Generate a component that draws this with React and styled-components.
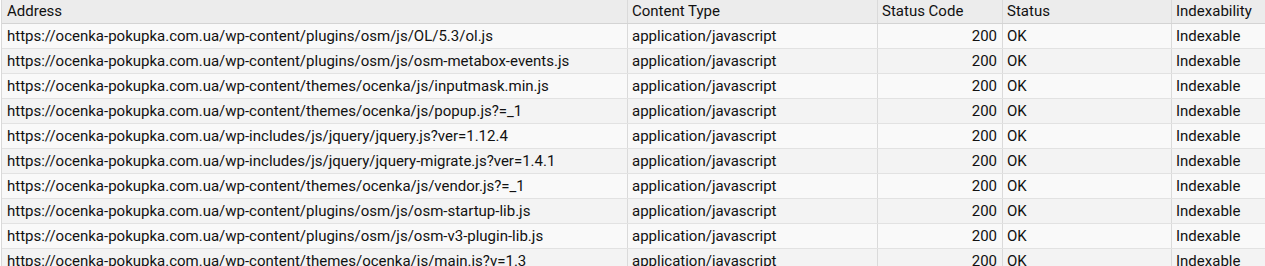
import React from 'react';
import styled, { createGlobalStyle } from 'styled-components';

const GlobalStyle = createGlobalStyle`
  html, body {
    margin: 0;
    padding: 0;
    background: #ffffff;
  }
  body {
    font-family: Roboto, "Liberation Sans", sans-serif;
    overflow: hidden;
  }
`;

const Grid = styled.div`
  width: 1264px;
  margin-left: 1px;
  border-left: 1px solid #d9d9d9;
  font-size: 15px;
  color: #111;
`;

const Row = styled.div`
  display: grid;
  grid-template-columns: 626px 250px 125px 169px 1fr;
  height: ${p => (p.$header ? 24 : 25)}px;
  background: ${p => (p.$header ? '#ececec' : p.$even ? '#f3f3f3' : '#f9f9f9')};
  border-bottom: 1px solid ${p => (p.$header ? '#d4d4d4' : '#e2e2e2')};
  box-sizing: border-box;
`;

const Cell = styled.div`
  box-sizing: border-box;
  border-right: 1px solid #dadada;
  padding: 0 ${p => (p.$right ? '5px' : '4px')} 0 ${p => (p.$first ? '5px' : '4px')};
  text-align: ${p => (p.$right ? 'right' : 'left')};
  line-height: ${p => (p.$header ? 23 : 24)}px;
  white-space: nowrap;
  overflow: hidden;

  &:last-child {
    border-right: none;
  }
`;

const columns = ['Address', 'Content Type', 'Status Code', 'Status', 'Indexability'];

const base = 'https://ocenka-pokupka.com.ua/';
const paths = [
  'wp-content/plugins/osm/js/OL/5.3/ol.js',
  'wp-content/plugins/osm/js/osm-metabox-events.js',
  'wp-content/themes/ocenka/js/inputmask.min.js',
  'wp-content/themes/ocenka/js/popup.js?=_1',
  'wp-includes/js/jquery/jquery.js?ver=1.12.4',
  'wp-includes/js/jquery/jquery-migrate.js?ver=1.4.1',
  'wp-content/themes/ocenka/js/vendor.js?=_1',
  'wp-content/plugins/osm/js/osm-startup-lib.js',
  'wp-content/plugins/osm/js/osm-v3-plugin-lib.js',
  'wp-content/themes/ocenka/js/main.js?v=1.3',
];

const rows = paths.map(p => ({
  address: base + p,
  type: 'application/javascript',
  code: 200,
  status: 'OK',
  index: 'Indexable',
}));

export default function App() {
  return (
    <>
      <GlobalStyle />
      <Grid>
        <Row $header>
          {columns.map((c, i) => (
            <Cell key={c} $header $first={i === 0}>{c}</Cell>
          ))}
        </Row>
        {rows.map((r, i) => (
          <Row key={i} $even={i % 2 === 1}>
            <Cell $first>{r.address}</Cell>
            <Cell>{r.type}</Cell>
            <Cell $right>{r.code}</Cell>
            <Cell>{r.status}</Cell>
            <Cell>{r.index}</Cell>
          </Row>
        ))}
      </Grid>
    </>
  );
}
